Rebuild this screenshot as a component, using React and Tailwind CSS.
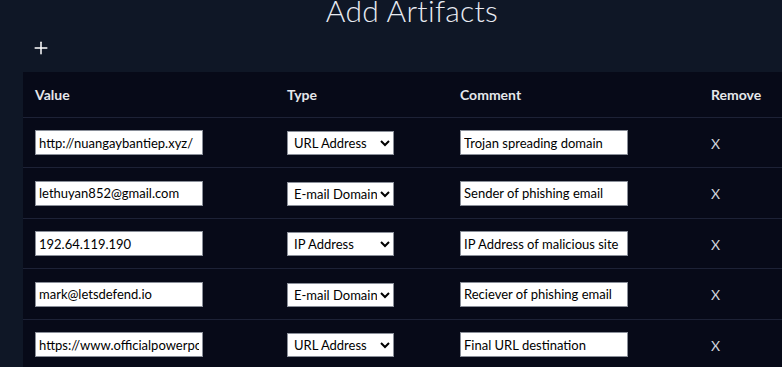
import { Plus } from 'lucide-react';

const ROWS = [
  { value: 'http://nuangaybantiep.xyz/', type: 'URL Address', comment: 'Trojan spreading domain', h: 'h-[50px]' },
  { value: 'lethuyan852@gmail.com', type: 'E-mail Domain', comment: 'Sender of phishing email', h: 'h-[51px]' },
  { value: '192.64.119.190', type: 'IP Address', comment: 'IP Address of malicious site', h: 'h-[50px]' },
  { value: 'mark@letsdefend.io', type: 'E-mail Domain', comment: 'Reciever of phishing email', h: 'h-[51px]' },
  { value: 'https://www.officialpowerpoint.com/login', type: 'URL Address', comment: 'Final URL destination', h: 'h-[49px]' },
];

const TYPES = ['URL Address', 'E-mail Domain', 'IP Address'];

const GRID = 'grid grid-cols-[252px_173px_251px_1fr]';

export default function App() {
  return (
    <div className="w-[782px] h-[367px] overflow-hidden bg-[#0f1726] text-gray-100 font-['Lato','Noto_Sans',sans-serif]">
      {/* Title */}
      <div className="h-[38px] flex justify-center pl-[42px]">
        <h1 className="text-[30px] leading-[30px] -mt-[5px] font-light text-[#e8ebf2] tracking-[0.3px]">
          Add Artifacts
        </h1>
      </div>

      {/* Add button */}
      <div className="h-[34px] pl-[31px]">
        <button className="text-white">
          <Plus className="w-[20px] h-[20px]" strokeWidth={1.8} />
        </button>
      </div>

      {/* Table */}
      <div className="ml-[23px] bg-[#070a18]">
        <div className={`${GRID} h-[46px] items-center border-b border-[#1d2236] text-[14px] font-bold text-[#e5e7eb]`}>
          <div className="pl-3">Value</div>
          <div className="pl-3">Type</div>
          <div className="pl-3">Comment</div>
          <div className="pl-3">Remove</div>
        </div>

        {ROWS.map((row, i) => (
          <div
            key={i}
            className={`${GRID} ${row.h} items-center ${i < ROWS.length - 1 ? 'border-b border-[#1d2236]' : ''}`}
          >
            <div className="pl-3">
              <input
                defaultValue={row.value}
                className="w-[168px] h-[25px] bg-white border border-[#8a8f99] px-[3px] text-[13px] text-black outline-none"
              />
            </div>
            <div className="pl-3">
              <select
                defaultValue={row.type}
                className="w-[107px] h-[24px] bg-white border border-[#8a8f99] pl-[2px] text-[13px] text-black"
              >
                {TYPES.map((t) => (
                  <option key={t}>{t}</option>
                ))}
              </select>
            </div>
            <div className="pl-3">
              <input
                defaultValue={row.comment}
                className="w-[168px] h-[25px] bg-white border border-[#8a8f99] px-[3px] text-[13px] text-black outline-none"
              />
            </div>
            <div className="pl-3">
              <button className="text-[14px] text-[#cfd3dc]">X</button>
            </div>
          </div>
        ))}
      </div>
      <div className="h-[10px] bg-[#070a18]" />
    </div>
  );
}
